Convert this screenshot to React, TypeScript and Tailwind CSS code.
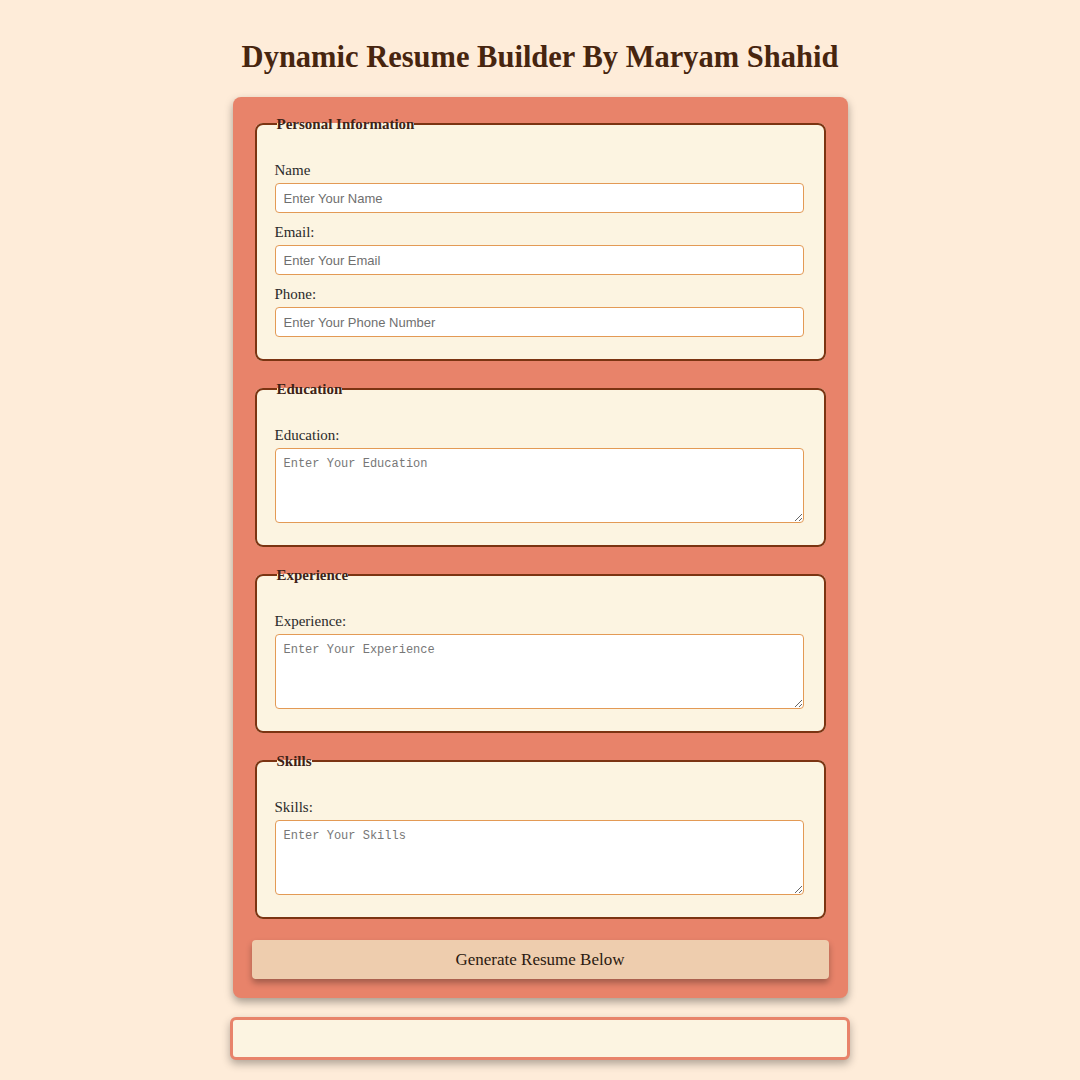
import React from 'react'

const SERIF = "font-['Liberation_Serif','Times_New_Roman',serif]"

type Field = { label: string; placeholder: string; area?: boolean }

const SECTIONS: { legend: string; fields: Field[] }[] = [
  {
    legend: 'Personal Information',
    fields: [
      { label: 'Name', placeholder: 'Enter Your Name' },
      { label: 'Email:', placeholder: 'Enter Your Email' },
      { label: 'Phone:', placeholder: 'Enter Your Phone Number' },
    ],
  },
  { legend: 'Education', fields: [{ label: 'Education:', placeholder: 'Enter Your Education', area: true }] },
  { legend: 'Experience', fields: [{ label: 'Experience:', placeholder: 'Enter Your Experience', area: true }] },
  { legend: 'Skills', fields: [{ label: 'Skills:', placeholder: 'Enter Your Skills', area: true }] },
]

function Section({ legend, fields }: { legend: string; fields: Field[] }) {
  return (
    <fieldset className="mx-[3px] rounded-lg border-2 border-[#7b3412] bg-[#fcf4e1] pr-[20px] pb-[22px] pl-[18px]">
      <legend className="ml-[2px] p-0 text-[15px] font-bold leading-[16px] text-[#3e2216]">{legend}</legend>
      <div className="mt-[29px] flex flex-col gap-[10px]">
        {fields.map((f) => (
          <div key={f.label} className="flex flex-col">
            <label className="mb-[4px] text-[15px] leading-[18px] text-[#2a2a2a]">{f.label}</label>
            {f.area ? (
              <textarea
                placeholder={f.placeholder}
                className="block h-[75px] w-full rounded-[4px] border border-[#e39a55] bg-white px-[8px] py-[7px] font-['Liberation_Mono','Courier_New',monospace] text-[12px] leading-[16px] text-[#333] outline-none placeholder:text-[#777]"
              />
            ) : (
              <input
                placeholder={f.placeholder}
                className="block h-[30px] w-full rounded-[4px] border border-[#e39a55] bg-white px-[8px] font-['Liberation_Sans',Arial,sans-serif] text-[13px] text-[#333] outline-none placeholder:text-[#6f6f6f]"
              />
            )}
          </div>
        ))}
      </div>
    </fieldset>
  )
}

export default function App() {
  return (
    <div className={`min-h-[1080px] bg-[#feecd9] pb-[20px] ${SERIF}`}>
      <h1 className="pt-[38px] pb-[21px] text-center text-[30.5px] font-bold leading-[38px] text-[#47250f]">
        Dynamic Resume Builder By Maryam Shahid
      </h1>

      {/* Form card */}
      <div className="mx-auto flex w-[615px] flex-col gap-[20px] rounded-lg bg-[#e8836a] px-[19px] pt-[19px] pb-[19px] shadow-[0_4px_8px_rgba(0,0,0,0.35)]">
        {SECTIONS.map((s) => (
          <Section key={s.legend} legend={s.legend} fields={s.fields} />
        ))}
        <button className="mt-[1px] h-[39px] w-full rounded-[4px] bg-[#eecdae] text-[17px] text-[#2b1a10] shadow-[0_4px_6px_rgba(0,0,0,0.3)]">
          Generate Resume Below
        </button>
      </div>

      {/* Output */}
      <div className="mx-auto mt-[19px] h-[43px] w-[620px] rounded-md border-[3px] border-[#e8836a] bg-[#fcf4e1] shadow-[0_4px_8px_rgba(0,0,0,0.3)]" />
    </div>
  )
}
